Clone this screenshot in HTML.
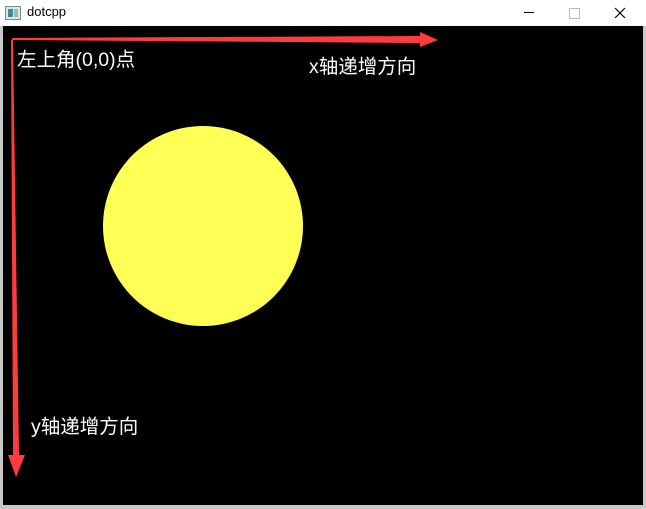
<!DOCTYPE html>
<html><head><meta charset="utf-8"><style>
body{margin:0;width:646px;height:509px;overflow:hidden;background:#fff;font-family:"Liberation Sans","Noto Sans CJK SC",sans-serif;position:relative}
.title{position:absolute;left:0;top:0;width:646px;height:26px;background:#fff}
.canvas{position:absolute;left:3px;top:26px;width:640px;height:479px;background:#000}
.lbl{position:absolute;color:#fff;font-size:19.5px;line-height:20px;white-space:nowrap}
</style></head><body>
<div style="position:absolute;left:0;top:0;width:646px;height:509px;background:#c8c8c8"></div>
<div class="title"></div>
<svg style="position:absolute;left:5px;top:6px" width="16" height="14" viewBox="0 0 16 14"><rect x="0.5" y="0.5" width="15" height="13" fill="#dfe6ea" stroke="#7a8a96"/><rect x="3" y="3" width="5" height="8" fill="#3f8a9a"/><rect x="9" y="3" width="4" height="8" fill="#9bb"/></svg>
<div style="position:absolute;left:27px;top:4px;font-size:13px;color:#000">dotcpp</div>
<div style="position:absolute;left:524px;top:12px;width:10px;height:1px;background:#000"></div>
<div style="position:absolute;left:569px;top:8px;width:9px;height:9px;border:1px solid #bbb"></div>
<svg style="position:absolute;left:614px;top:7px" width="12" height="12"><path d="M1 1L11 11M11 1L1 11" stroke="#000" stroke-width="1.2"/></svg>
<div class="canvas"></div>
<svg style="position:absolute;left:0;top:0" width="646" height="509">
<circle cx="203" cy="226" r="100" fill="#ffff55"/>
<polygon points="12,38 420,36 420,32 438,40 420,47 420,43 12,40" fill="#ff3c3c"/>
<polygon points="11,40 13,40 19,455 25,455 16,477 8,455 13,455" fill="#ff3c3c"/>
</svg>
<div class="lbl" style="left:17px;top:50px">左上角(0,0)点</div>
<div class="lbl" style="left:309px;top:57px">x轴递增方向</div>
<div class="lbl" style="left:31px;top:417px">y轴递增方向</div>
</body></html>
